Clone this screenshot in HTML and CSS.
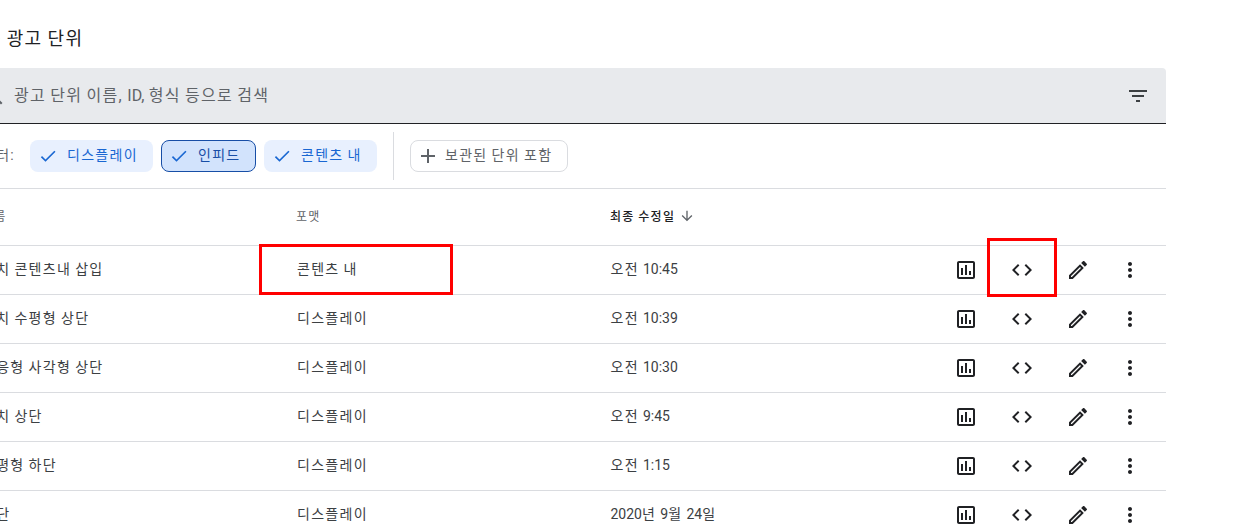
FILE: index.html
```html
<!DOCTYPE html>
<html lang="ko">
<head>
<meta charset="utf-8">
<title>광고 단위</title>
<link rel="stylesheet" href="styles.css">
</head>
<body>
<svg class="defs" width="0" height="0" aria-hidden="true">
  <symbol id="i-poll" viewBox="0 0 24 24"><path d="M19 3H5c-1.1 0-2 .9-2 2v14c0 1.1.9 2 2 2h14c1.1 0 2-.9 2-2V5c0-1.1-.9-2-2-2zm0 16H5V5h14v14zM7 10h2v7H7zm4-3h2v10h-2zm4 6h2v4h-2z"/></symbol>
  <symbol id="i-code" viewBox="0 0 24 24"><path d="M9.4 16.6L4.8 12l4.6-4.6L8 6l-6 6 6 6 1.4-1.4zm5.2 0l4.6-4.6-4.6-4.6L16 6l6 6-6 6-1.4-1.4z"/></symbol>
  <symbol id="i-edit" viewBox="0 0 24 24"><path d="M14.06 9.02l.92.92L5.92 19H5v-.92l9.06-9.06M17.66 3c-.25 0-.51.1-.7.29l-1.83 1.83 3.75 3.75 1.83-1.83c.39-.39.39-1.02 0-1.41l-2.34-2.34c-.2-.2-.45-.29-.71-.29zm-3.6 3.19L3 17.25V21h3.75L17.81 9.94l-3.75-3.75z"/></symbol>
  <symbol id="i-more" viewBox="0 0 24 24"><path d="M12 8c1.1 0 2-.9 2-2s-.9-2-2-2-2 .9-2 2 .9 2 2 2zm0 2c-1.1 0-2 .9-2 2s.9 2 2 2 2-.9 2-2-.9-2-2-2zm0 6c-1.1 0-2 .9-2 2s.9 2 2 2 2-.9 2-2-.9-2-2-2z"/></symbol>
  <symbol id="i-check" viewBox="0 0 24 24"><path d="M9 16.17L4.83 12l-1.42 1.41L9 19 21 7l-1.41-1.41z"/></symbol>
</svg>
<main class="panel">
  <h1 class="title">모든 광고 단위</h1>
  <div class="search">
    <svg class="search-icon" viewBox="0 0 24 24"><path d="M15.5 14h-.79l-.28-.27C15.41 12.59 16 11.11 16 9.5 16 5.91 13.09 3 9.5 3S3 5.91 3 9.5 5.91 16 9.5 16c1.61 0 3.09-.59 4.23-1.57l.27.28v.79l5 4.99L20.49 19l-4.99-5zm-6 0C7.01 14 5 11.99 5 9.5S7.01 5 9.5 5 14 7.01 14 9.5 11.99 14 9.5 14z"/></svg>
    <span class="search-text">광고 단위 이름, <span class="lat">ID,</span> 형식 등으로 검색</span>
    <svg class="filter-icon" viewBox="0 0 24 24"><path d="M10 18h4v-2h-4v2zM3 6v2h18V6H3zm3 7h12v-2H6v2z"/></svg>
  </div>
  <div class="filters">
    <span class="filters-label">필터:</span>
    <span class="chip chip-a"><svg class="chip-check"><use href="#i-check"/></svg><span class="chip-label">디스플레이</span></span>
    <span class="chip chip-b chip-active"><svg class="chip-check"><use href="#i-check"/></svg><span class="chip-label">인피드</span></span>
    <span class="chip chip-c"><svg class="chip-check"><use href="#i-check"/></svg><span class="chip-label">콘텐츠 내</span></span>
    <span class="divider"></span>
    <span class="add-chip"><svg class="add-icon" viewBox="0 0 24 24"><path d="M19 13h-6v6h-2v-6H5v-2h6V5h2v6h6v2z"/></svg><span class="chip-label">보관된 단위 포함</span></span>
  </div>
  <div class="row head">
    <span class="cell-name">이름</span>
    <span class="cell-format">포맷</span>
    <span class="cell-date sorted">최종 수정일<svg class="sort-icon" viewBox="0 0 24 24"><path d="M20 12l-1.41-1.41L13 16.17V4h-2v12.17l-5.58-5.59L4 12l8 8 8-8z"/></svg></span>
  </div>
  <div class="row">
    <span class="cell-name">위치 콘텐츠내 삽입</span><span class="cell-format">콘텐츠 내</span><span class="cell-date"><span>오전 <span class="lat">10:45</span></span></span>
    <span class="actions"><svg class="act"><use href="#i-poll"/></svg><svg class="act"><use href="#i-code"/></svg><svg class="act"><use href="#i-edit"/></svg><svg class="act act-more"><use href="#i-more"/></svg></span>
  </div>
  <div class="row">
    <span class="cell-name">위치 수평형 상단</span><span class="cell-format">디스플레이</span><span class="cell-date"><span>오전 <span class="lat">10:39</span></span></span>
    <span class="actions"><svg class="act"><use href="#i-poll"/></svg><svg class="act"><use href="#i-code"/></svg><svg class="act"><use href="#i-edit"/></svg><svg class="act act-more"><use href="#i-more"/></svg></span>
  </div>
  <div class="row">
    <span class="cell-name">반응형 사각형 상단</span><span class="cell-format">디스플레이</span><span class="cell-date"><span>오전 <span class="lat">10:30</span></span></span>
    <span class="actions"><svg class="act"><use href="#i-poll"/></svg><svg class="act"><use href="#i-code"/></svg><svg class="act"><use href="#i-edit"/></svg><svg class="act act-more"><use href="#i-more"/></svg></span>
  </div>
  <div class="row">
    <span class="cell-name">위치 상단</span><span class="cell-format">디스플레이</span><span class="cell-date"><span>오전 <span class="lat">9:45</span></span></span>
    <span class="actions"><svg class="act"><use href="#i-poll"/></svg><svg class="act"><use href="#i-code"/></svg><svg class="act"><use href="#i-edit"/></svg><svg class="act act-more"><use href="#i-more"/></svg></span>
  </div>
  <div class="row">
    <span class="cell-name">수평형 하단</span><span class="cell-format">디스플레이</span><span class="cell-date"><span>오전 <span class="lat">1:15</span></span></span>
    <span class="actions"><svg class="act"><use href="#i-poll"/></svg><svg class="act"><use href="#i-code"/></svg><svg class="act"><use href="#i-edit"/></svg><svg class="act act-more"><use href="#i-more"/></svg></span>
  </div>
  <div class="row">
    <span class="cell-name">상단</span><span class="cell-format">디스플레이</span><span class="cell-date"><span><span class="lat">2020</span>년 <span class="lat">9</span>월 <span class="lat">24</span>일</span></span>
    <span class="actions"><svg class="act"><use href="#i-poll"/></svg><svg class="act"><use href="#i-code"/></svg><svg class="act"><use href="#i-edit"/></svg><svg class="act act-more"><use href="#i-more"/></svg></span>
  </div>
</main>
<div class="mark mark-format"></div>
<div class="mark mark-code"></div>
</body>
</html>
```

FILE: styles.css
```css
html, body {
  margin: 0;
  height: 529px;
  overflow: hidden;
  background: #fff;
}
body {
  position: relative;
  font-family: Roboto, "Noto Sans CJK KR", "Noto Sans", sans-serif;
  color: #202124;
  letter-spacing: .08em;
  word-spacing: -.04em;
}
.defs { position: absolute; }
.lat { letter-spacing: 0; word-spacing: 0; }
.panel {
  width: 1200px;
  margin-left: -34px;
}
.title {
  margin: 0;
  height: 68px;
  font-size: 18px;
  font-weight: 400;
  line-height: 77px;
  white-space: nowrap;
}
.search {
  display: flex;
  align-items: center;
  height: 56px;
  box-sizing: border-box;
  padding: 0 16px;
  background: #e8eaed;
  border-bottom: 1px solid #202124;
  border-radius: 4px 4px 0 0;
}
.search-icon {
  width: 24px;
  height: 24px;
  fill: #5f6368;
  flex: none;
}
.search-text {
  margin-left: 8px;
  padding-bottom: 4px;
  font-size: 16px;
  word-spacing: -.06em;
  color: #5f6368;
  white-space: nowrap;
}
.filter-icon {
  width: 24px;
  height: 24px;
  fill: #3c4043;
  margin-left: auto;
}
.filters {
  display: flex;
  align-items: center;
  height: 65px;
  box-sizing: border-box;
  padding-left: 16px;
  border-bottom: 1px solid #dadce0;
}
.filters-label {
  width: 48px;
  padding-bottom: 5px;
  font-size: 14px;
  color: #5f6368;
  white-space: nowrap;
}
.chip {
  display: flex;
  align-items: center;
  height: 32px;
  box-sizing: border-box;
  margin-right: 8px;
  padding-left: 8px;
  background: #e8f0fe;
  border-radius: 8px;
  color: #1967d2;
  font-size: 14px;
  white-space: nowrap;
}
.chip-label { padding-bottom: 5px; }
.chip-a { width: 123px; }
.chip-b { width: 95px; }
.chip-c { width: 113px; margin-right: 0; }
.chip-active {
  background: #d2e3fc;
  border: 1px solid #174ea6;
  padding-left: 7px;
  color: #174ea6;
}
.chip-check {
  width: 20px;
  height: 20px;
  margin-right: 9px;
  fill: #1967d2;
  flex: none;
}
.divider {
  width: 1px;
  height: 48px;
  margin: 0 16px;
  background: #dadce0;
}
.add-chip {
  display: flex;
  align-items: center;
  width: 158px;
  height: 32px;
  box-sizing: border-box;
  padding-left: 5px;
  border: 1px solid #dadce0;
  border-radius: 8px;
  font-size: 14px;
  color: #5f6368;
  white-space: nowrap;
}
.add-icon {
  width: 24px;
  height: 24px;
  margin-right: 5px;
  fill: #5f6368;
  flex: none;
}
.row {
  display: flex;
  align-items: center;
  height: 49px;
  box-sizing: border-box;
  padding-left: 16px;
  border-bottom: 1px solid #dadce0;
  font-size: 14px;
  color: #3c4043;
  white-space: nowrap;
}
.head {
  height: 57px;
  font-size: 12px;
  color: #5f6368;
}
.cell-name {
  width: 315px;
  padding-bottom: 4px;
  flex: none;
}
.head .cell-name { width: 314px; }
.cell-format {
  width: 313.5px;
  padding-bottom: 4px;
  flex: none;
}
.head .cell-format { width: 314px; }
.cell-date {
  display: flex;
  align-items: center;
  width: 343.5px;
  padding-bottom: 4px;
  flex: none;
}
.sorted {
  color: #202124;
  font-weight: 500;
}
.sort-icon {
  width: 16px;
  height: 16px;
  margin: 2px 0 0 4px;
  fill: #5f6368;
}
.actions {
  display: flex;
  align-items: center;
}
.act {
  width: 24px;
  height: 24px;
  margin-right: 32px;
  fill: #202124;
  flex: none;
}
.act-more { margin-left: -4px; margin-right: 0; }
.mark {
  position: absolute;
  box-sizing: border-box;
  border: 3px solid #f00;
}
.mark-format { left: 259px; top: 244px; width: 194px; height: 51px; }
.mark-code { left: 987px; top: 238px; width: 70px; height: 59px; }
```
